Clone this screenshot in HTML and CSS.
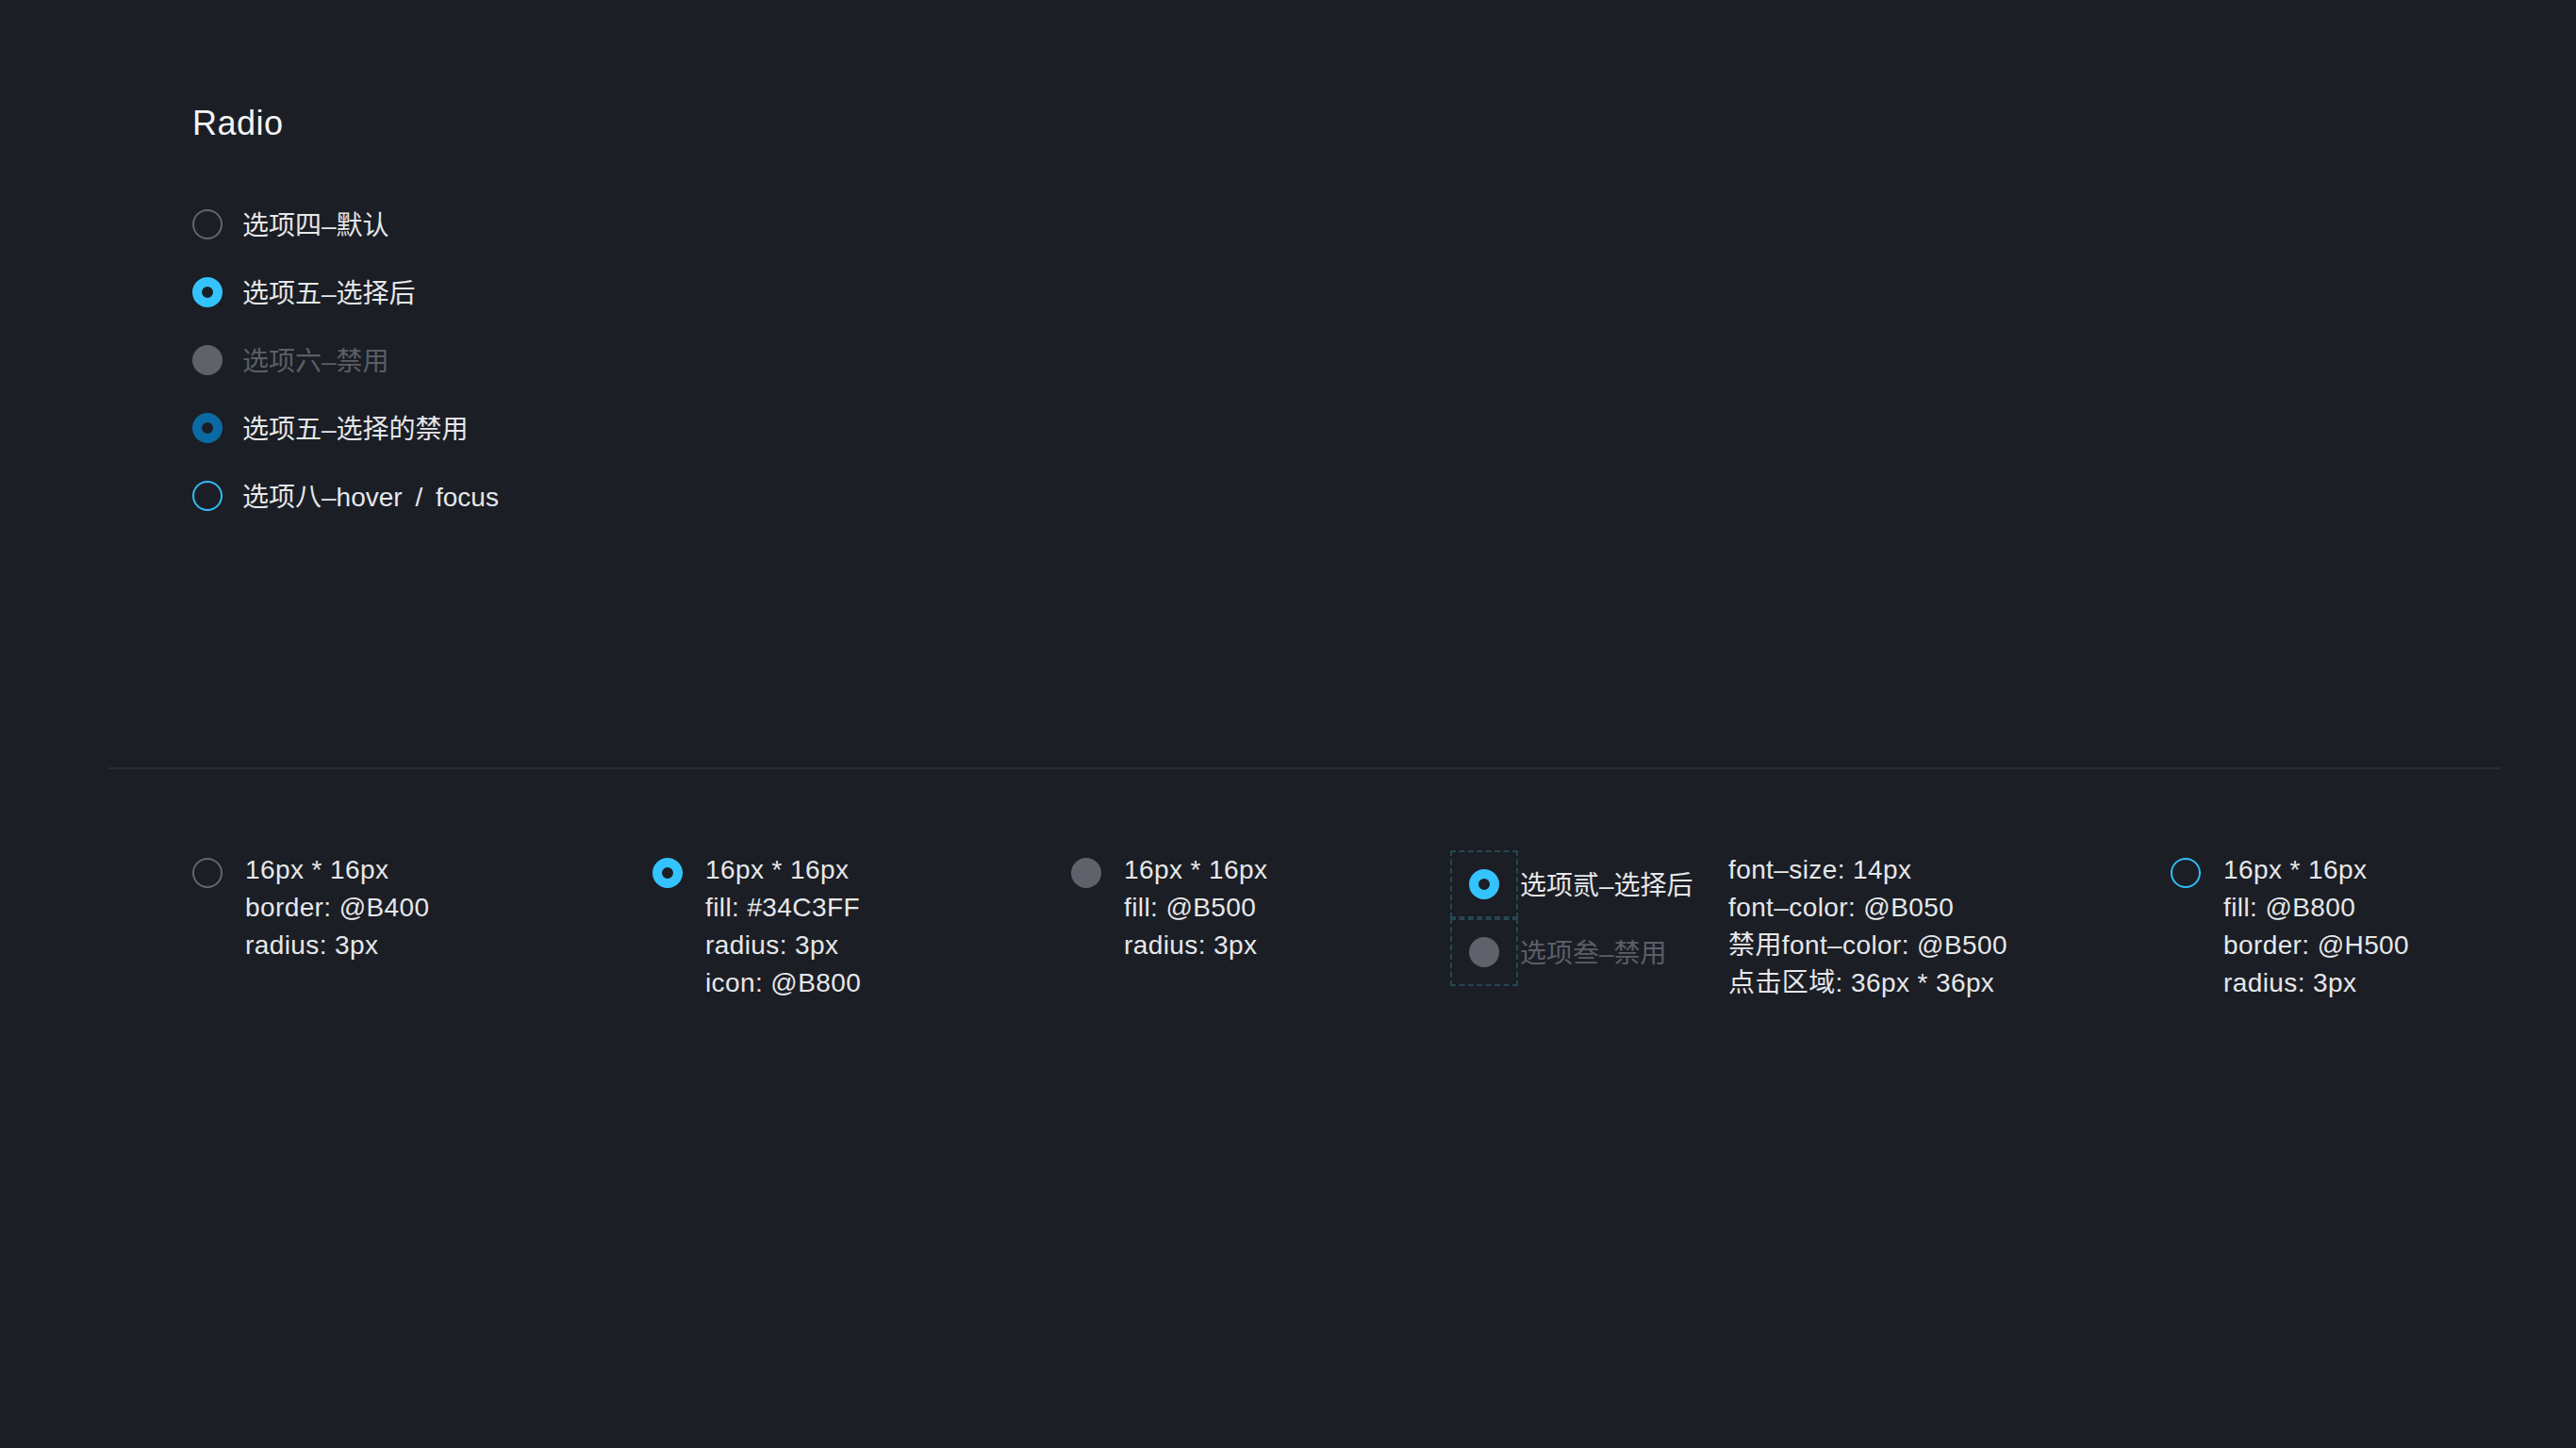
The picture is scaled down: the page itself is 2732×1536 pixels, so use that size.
FILE: index.html
```html
<!DOCTYPE html>
<html lang="zh-CN">
<head>
<meta charset="utf-8">
<title>Radio</title>
<link rel="stylesheet" href="styles.css">
</head>
<body>
<div class="page">
  <section class="demo">
    <h1 class="title">Radio</h1>
    <ul class="radio-list">
      <li class="radio-row"><span class="radio"></span><span class="label">选项四–默认</span></li>
      <li class="radio-row"><span class="radio radio--checked"></span><span class="label">选项五–选择后</span></li>
      <li class="radio-row"><span class="radio radio--disabled"></span><span class="label label--disabled">选项六–禁用</span></li>
      <li class="radio-row"><span class="radio radio--checked-disabled"></span><span class="label">选项五–选择的禁用</span></li>
      <li class="radio-row"><span class="radio radio--hover"></span><span class="label label--wide">选项八–hover / focus</span></li>
    </ul>
  </section>

  <hr class="divider">

  <section class="specs">
    <div class="spec">
      <span class="radio radio--spec"></span>
      <div class="spec-text">
        <p>16px * 16px</p>
        <p>border: @B400</p>
        <p>radius: 3px</p>
      </div>
    </div>
    <div class="spec">
      <span class="radio radio--spec radio--checked"></span>
      <div class="spec-text">
        <p>16px * 16px</p>
        <p>fill: #34C3FF</p>
        <p>radius: 3px</p>
        <p>icon: @B800</p>
      </div>
    </div>
    <div class="spec">
      <span class="radio radio--spec radio--disabled"></span>
      <div class="spec-text">
        <p>16px * 16px</p>
        <p>fill: @B500</p>
        <p>radius: 3px</p>
      </div>
    </div>
    <div class="hit-group">
      <div class="hit-row">
        <div class="hit-box"><span class="radio radio--checked"></span></div>
        <span class="label">选项贰–选择后</span>
      </div>
      <div class="hit-row">
        <div class="hit-box"><span class="radio radio--disabled"></span></div>
        <span class="label label--disabled">选项叁–禁用</span>
      </div>
    </div>
    <div class="spec-text">
      <p>font–size: 14px</p>
      <p>font–color: @B050</p>
      <p>禁用font–color: @B500</p>
      <p>点击区域: 36px * 36px</p>
    </div>
    <div class="spec">
      <span class="radio radio--spec radio--hover"></span>
      <div class="spec-text">
        <p>16px * 16px</p>
        <p>fill: @B800</p>
        <p>border: @H500</p>
        <p>radius: 3px</p>
      </div>
    </div>
  </section>
</div>
</body>
</html>
```

FILE: styles.css
```css
* {
  box-sizing: border-box;
}

html, body {
  margin: 0;
  padding: 0;
  background: #1b1e25;
}

body {
  width: 2732px;
  height: 1536px;
  overflow: hidden;
  font-family: "Liberation Sans", "Noto Sans CJK SC", sans-serif;
  color: #e6e7e9;
}

.page {
  display: flex;
  flex-direction: column;
}

.demo {
  padding: 107px 0 0 204px;
}

.title {
  margin: 0;
  font-size: 36px;
  line-height: 48px;
  font-weight: 400;
  letter-spacing: 0.5px;
  color: #f4f4f5;
}

.radio-list {
  list-style: none;
  margin: 47px 0 0 0;
  padding: 0;
}

.radio-row {
  height: 72px;
  display: flex;
  align-items: center;
  gap: 21px;
}

.label {
  padding-top: 3px;
  font-size: 28px;
  line-height: 40px;
  color: #e6e7e9;
  white-space: nowrap;
}

.label--wide {
  word-spacing: 6px;
}

.label--disabled {
  color: #5b5e67;
}

.radio {
  flex: none;
  display: block;
  width: 32px;
  height: 32px;
  border-radius: 50%;
  border: 2px solid #63666e;
  background: transparent;
}

.radio--checked {
  border: 10px solid #34c3ff;
  background: #1b1e25;
}

.radio--disabled {
  border: none;
  background: #5f626b;
}

.radio--checked-disabled {
  border: 10px solid #0b69a3;
  background: #1b1e25;
}

.radio--hover {
  border: 2px solid #30bdf5;
}

.divider {
  margin: 252px 80px 0 115px;
  height: 2px;
  border: none;
  background: #2a2d36;
}

.specs {
  margin-top: 86px;
  padding-left: 204px;
  display: grid;
  grid-template-columns: 488px 444px 402px 295px 469px auto;
  align-items: start;
}

.spec {
  display: flex;
  align-items: flex-start;
  gap: 24px;
}

.radio--spec {
  margin-top: 8px;
}

.spec-text {
  padding-top: 1px;
}

.spec-text p {
  margin: 0;
  font-size: 28px;
  line-height: 40px;
  letter-spacing: 0.4px;
  color: #e6e7e9;
  white-space: nowrap;
}

.hit-group {
  display: flex;
  flex-direction: column;
}

.hit-row {
  display: flex;
  align-items: center;
  gap: 2px;
}

.hit-box {
  width: 72px;
  height: 72px;
  border: 2px dashed #264752;
  display: flex;
  align-items: center;
  justify-content: center;
}
```
